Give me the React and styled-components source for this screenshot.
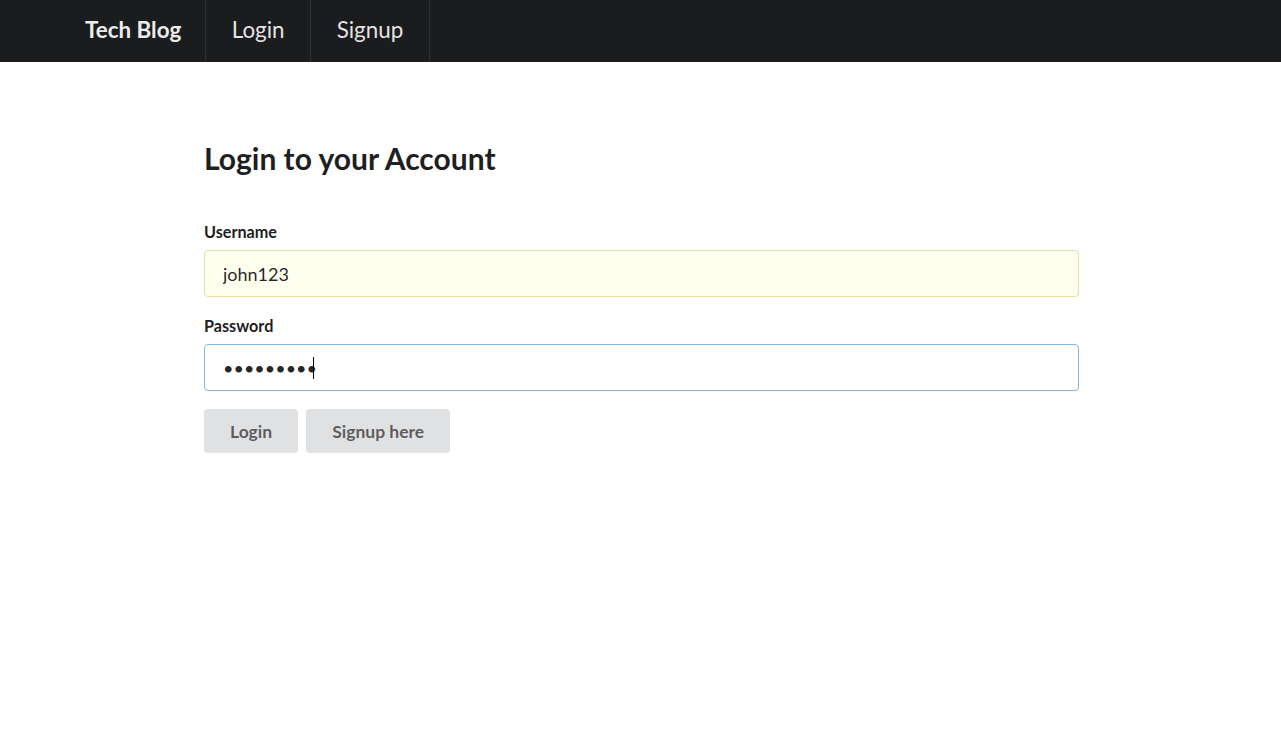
import React from "react";
import styled, { createGlobalStyle } from "styled-components";

const GlobalStyle = createGlobalStyle`
  body {
    margin: 0;
    background: #ffffff;
    font-family: Lato, "Helvetica Neue", Arial, sans-serif;
    color: rgba(0, 0, 0, 0.87);
  }
`;

const NavBar = styled.nav`
  height: 62px;
  background: #1b1c1d;
  display: flex;
  align-items: stretch;
  padding-left: 60px;
`;

const NavItem = styled.a`
  display: flex;
  align-items: center;
  padding: 0 ${(p) => (p.brand ? "24px 4px 25px" : "25.5px 4px 25.5px")};
  font-size: 22.4px;
  font-weight: ${(p) => (p.brand ? 700 : 400)};
  color: ${(p) => (p.brand ? "#ececec" : "rgba(255, 255, 255, 0.9)")};
  border-right: 1.5px solid #303132;
  text-decoration: none;
  cursor: pointer;
`;

const Main = styled.main`
  width: 875px;
  margin: 0 auto;
  padding: 78px 0 0 0;
  position: relative;
  left: 1px;
`;

const Heading = styled.h2`
  margin: 0 0 47px 0;
  font-size: 30px;
  font-weight: 700;
  line-height: 36px;
  color: #1f1f1f;
`;

const Form = styled.form`
  display: flex;
  flex-direction: column;
`;

const Field = styled.div`
  display: flex;
  flex-direction: column;
  margin-bottom: ${(p) => (p.last ? "18px" : "20px")};
`;

const Label = styled.label`
  font-size: 16.2px;
  font-weight: 700;
  line-height: 18px;
  color: #1f1f1f;
  margin-bottom: 9px;
`;

const InputWrap = styled.div`
  position: relative;
  display: flex;
  flex-direction: column;
`;

const Input = styled.input`
  box-sizing: border-box;
  height: 47px;
  padding: 0 18px;
  font-family: Lato, "Helvetica Neue", Arial, sans-serif;
  font-size: 18px;
  color: rgba(0, 0, 0, 0.87);
  border-radius: 4px;
  outline: none;
  caret-color: transparent;
  background: ${(p) => (p.filled ? "#fffff0" : "#ffffff")};
  border: 1px solid ${(p) => (p.active ? "#85b7d9" : p.filled ? "#e5dfa1" : "rgba(34, 36, 38, 0.15)")};
`;

const Caret = styled.span`
  position: absolute;
  left: ${(p) => p.left}px;
  top: 13px;
  width: 1px;
  height: 22px;
  background: #000000;
  pointer-events: none;
`;

const Buttons = styled.div`
  display: flex;
  gap: 8px;
`;

const Button = styled.button`
  height: 44px;
  padding: 0 26px;
  border: none;
  border-radius: 4px;
  background: #e0e1e2;
  color: rgba(0, 0, 0, 0.6);
  font-family: Lato, "Helvetica Neue", Arial, sans-serif;
  font-size: 17.5px;
  font-weight: 700;
  cursor: pointer;
`;

export default function App() {
  return (
    <>
      <GlobalStyle />
      <NavBar>
        <NavItem brand>Tech Blog</NavItem>
        <NavItem>Login</NavItem>
        <NavItem>Signup</NavItem>
      </NavBar>
      <Main>
        <Heading>Login to your Account</Heading>
        <Form onSubmit={(e) => e.preventDefault()}>
          <Field>
            <Label htmlFor="username">Username</Label>
            <Input id="username" filled defaultValue="john123" />
          </Field>
          <Field last>
            <Label htmlFor="password">Password</Label>
            <InputWrap>
              <Input id="password" type="password" active defaultValue="123456789" />
              <Caret left={109} />
            </InputWrap>
          </Field>
          <Buttons>
            <Button type="submit">Login</Button>
            <Button type="button">Signup here</Button>
          </Buttons>
        </Form>
      </Main>
    </>
  );
}
